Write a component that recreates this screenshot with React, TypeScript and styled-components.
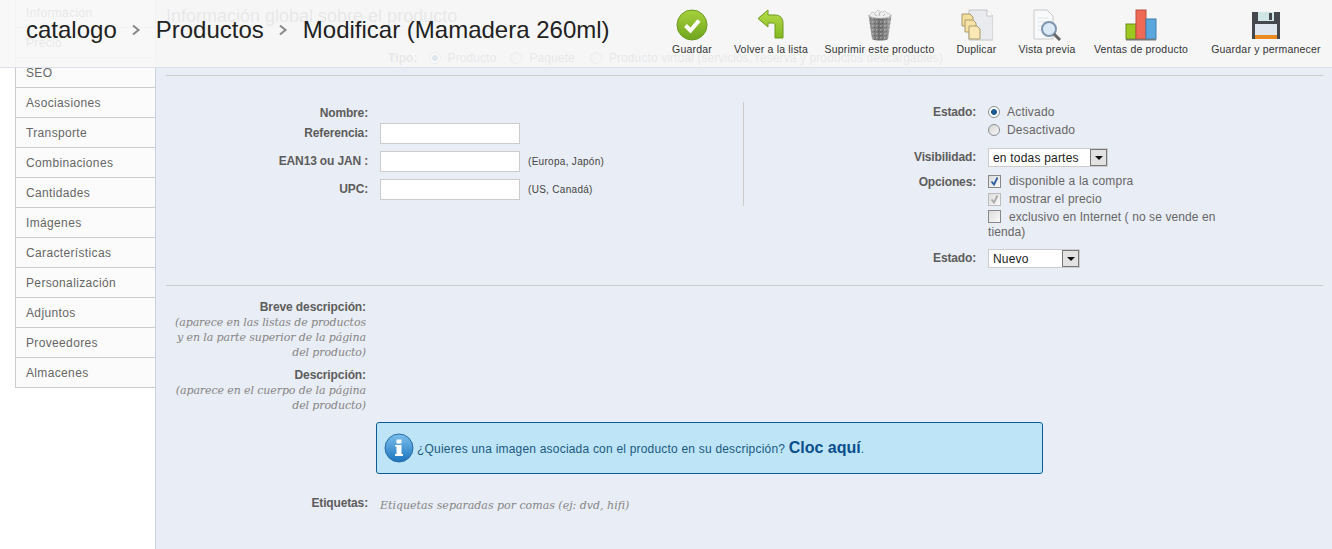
import React from 'react';
import styled, { createGlobalStyle } from 'styled-components';

const GlobalStyle = createGlobalStyle`
  html, body {
    margin: 0;
    padding: 0;
    background: #fff;
    overflow: hidden;
  }
  body {
    font-family: "Liberation Sans", Arial, sans-serif;
    font-size: 12px;
    color: #666;
  }
  * { box-sizing: border-box; }
`;

const Page = styled.div`
  position: relative;
  width: 1332px;
  height: 549px;
  overflow: hidden;
  display: flex;
  padding-left: 15px;
`;

/* translucent bar lying over the top of the page */
const Header = styled.header`
  position: absolute;
  top: 0;
  left: 0;
  right: 0;
  height: 68px;
  background: rgba(247, 247, 247, 0.89);
  border-bottom: 1px solid #dde1e8;
  display: flex;
  justify-content: space-between;
  padding-right: 1px;
`;

const Crumbs = styled.div`
  display: flex;
  align-items: center;
  height: 60px;
  padding-left: 26px;
  font-size: 24px;
  color: #222;
`;

const CrumbSep = styled.span`
  width: 39px;
  text-align: center;
  display: flex;
  justify-content: center;
`;

const Toolbar = styled.div`
  display: flex;
`;

const ToolItem = styled.div<{ $w: number }>`
  width: ${p => p.$w}px;
  display: flex;
  flex-direction: column;
  align-items: center;
  padding-top: 9px;
  font-size: 10.5px;
  letter-spacing: 0.2px;
  color: #333;
  white-space: nowrap;
`;

const ToolIcon = styled.svg`
  width: 32px;
  height: 32px;
  margin-bottom: 2px;
`;

const Sidebar = styled.ul`
  width: 140px;
  height: 390px;
  margin: -2px 0 0;
  padding: 0;
  list-style: none;
  background: #fbfbfb;
  border-left: 1px solid #ccc;
  flex-shrink: 0;
`;

const Tab = styled.li`
  height: 30px;
  line-height: 31px;
  padding-left: 10px;
  border-bottom: 1px solid #ccc;
  color: #666;
  letter-spacing: 0.35px;
`;

const Main = styled.main`
  flex: 1;
  height: 549px;
  background: #e9edf5;
  border-left: 1px solid #ccd2dc;
  padding: 0 9px 0 10px;
`;

const Title = styled.h2`
  margin: 0;
  height: 32px;
  line-height: 32px;
  font-size: 18px;
  font-weight: normal;
  color: #666;
`;

const TypeRow = styled.div`
  display: flex;
  align-items: center;
  height: 20px;
  margin-top: 16px;
  padding-left: 222px;
  color: #666;
  letter-spacing: 0.1px;
`;

const TypeLabel = styled.span`
  font-weight: bold;
  margin-right: 11px;
`;

const TypeOption = styled.span<{ $gap: number }>`
  display: flex;
  align-items: center;
  gap: 7px;
  margin-right: ${p => p.$gap}px;
`;

const Rule = styled.hr<{ $mt?: number }>`
  height: 1px;
  border: 0;
  margin: ${p => p.$mt ?? 0}px 0 0;
  background: #ccc;
`;

const TopForm = styled.div`
  display: flex;
  height: 183px;
  margin-top: 26px;
`;

const LeftColumn = styled.div`
  width: 578px;
  height: 104px;
  border-right: 1px solid #ccc;
`;

const RightColumn = styled.div`
  flex: 1;
`;

const Row = styled.div<{ $label: number; $mb?: number }>`
  display: grid;
  grid-template-columns: ${p => p.$label}px 1fr;
  column-gap: 12px;
  margin-bottom: ${p => p.$mb ?? 0}px;
`;

const Label = styled.label<{ $h?: number }>`
  display: block;
  text-align: right;
  font-weight: bold;
  letter-spacing: -0.15px;
  color: #5c5c5c;
  line-height: ${p => p.$h ?? 21}px;
`;

const FieldLine = styled.div`
  display: flex;
  align-items: center;
  min-height: 21px;
`;

const TextInput = styled.input`
  width: 140px;
  height: 21px;
  background: #fff;
  border: 1px solid #ccc;
  padding: 0 4px;
  margin: 0;
`;

const Note = styled.span`
  margin-left: 8px;
  font-size: 10px;
  color: #444;
  letter-spacing: 0.3px;
`;

const Stack = styled.div`
  width: 240px;
`;

const ChoiceLine = styled.div<{ $h: number }>`
  display: flex;
  align-items: center;
  height: ${p => p.$h}px;
  gap: 7px;
  letter-spacing: 0.2px;
`;

const Radio = styled.span<{ $on?: boolean }>`
  width: 12px;
  height: 12px;
  border-radius: 50%;
  flex-shrink: 0;
  border: 1px solid #8a8f96;
  background: ${p =>
    p.$on
      ? 'radial-gradient(circle, #1d5c90 0 2.6px, #fff 3.2px)'
      : 'linear-gradient(135deg, #d6d6d6, #f8f8f8)'};
`;

const Box = styled.span<{ $dim?: boolean }>`
  width: 13px;
  height: 13px;
  flex-shrink: 0;
  border: 1px solid ${p => (p.$dim ? '#bbb' : '#888')};
  background: linear-gradient(135deg, #dcdcdc, #fafafa);
  margin-right: 1px;
  display: flex;
  align-items: center;
  justify-content: center;
`;

const WrapText = styled.div`
  line-height: 15px;
  letter-spacing: 0.1px;
  margin-top: 2px;
`;

const InlineBox = styled(Box)`
  display: inline-flex;
  vertical-align: -2px;
  margin-right: 8px;
`;

const Select = styled.div<{ $w: number }>`
  width: ${p => p.$w}px;
  height: 19px;
  background: #fff;
  border: 1px solid #ccc;
  display: flex;
  align-items: center;
  justify-content: space-between;
  padding-left: 4px;
  color: #222;
  letter-spacing: 0.2px;
`;

const SelectArrow = styled.span`
  width: 17px;
  height: 17px;
  background: #e2e2e2;
  border: 1px solid #777;
  display: flex;
  align-items: center;
  justify-content: center;
  &::after {
    content: '';
    border-left: 4px solid transparent;
    border-right: 4px solid transparent;
    border-top: 4px solid #111;
  }
`;

const DescBlock = styled.div<{ $mt: number }>`
  width: 200px;
  margin-top: ${p => p.$mt}px;
  text-align: right;
`;

const DescLabel = styled.div`
  font-weight: bold;
  letter-spacing: -0.1px;
  color: #5c5c5c;
  line-height: 15px;
`;

const Hint = styled.div`
  font-family: "DejaVu Serif", "Liberation Serif", serif;
  font-style: italic;
  font-size: 11px;
  letter-spacing: -0.1px;
  line-height: 15px;
  color: #858585;
`;

const InfoBox = styled.div`
  width: 667px;
  height: 52px;
  margin: 9px 0 0 210px;
  background: #bde4f7;
  border: 1px solid #0f5a94;
  border-radius: 3px;
  display: flex;
  align-items: center;
  padding: 0 7px;
  gap: 3px;
  color: #1c5a80;
  letter-spacing: 0.2px;
`;

const InfoLink = styled.a`
  font-size: 16px;
  font-weight: bold;
  color: #0c4f8c;
  letter-spacing: 0;
`;

const TagRow = styled.div`
  display: grid;
  grid-template-columns: 202px 1fr;
  column-gap: 12px;
  margin-top: 19px;
  align-items: start;
`;

const TagHint = styled(Hint)`
  line-height: 21px;
  padding-top: 2px;
  letter-spacing: 0;
`;

const SaveIcon = () => (
  <ToolIcon viewBox="0 0 32 32">
    <defs>
      <linearGradient id="saveG" x1="0" y1="0" x2="0" y2="1">
        <stop offset="0" stopColor="#a6d13c" />
        <stop offset="1" stopColor="#6fa51d" />
      </linearGradient>
    </defs>
    <circle cx="16" cy="16" r="15" fill="url(#saveG)" stroke="#6b9a22" />
    <path d="M9.500 16.500l5 5 8.500-10" fill="none" stroke="#fff" strokeWidth="4" />
  </ToolIcon>
);

const BackIcon = () => (
  <ToolIcon viewBox="0 0 32 32">
    <defs>
      <linearGradient id="backG" x1="0" y1="0" x2="0" y2="1">
        <stop offset="0" stopColor="#b7dc4a" />
        <stop offset="1" stopColor="#83b81f" />
      </linearGradient>
    </defs>
    <path
      d="M3 9.500L13 1v5h7c5 0 8 3 8 8v15h-8V16c0-1-1-2-2-2h-5v4z"
      fill="url(#backG)"
      stroke="#6f9a1d"
    />
  </ToolIcon>
);

const TrashIcon = () => (
  <ToolIcon viewBox="0 0 32 32">
    <defs>
      <linearGradient id="binG" x1="0" y1="0" x2="1" y2="0">
        <stop offset="0" stopColor="#9a9a9a" />
        <stop offset="0.5" stopColor="#6e6e6e" />
        <stop offset="1" stopColor="#a5a5a5" />
      </linearGradient>
      <pattern id="binMesh" width="4" height="4" patternUnits="userSpaceOnUse">
        <rect x="0" y="0" width="1.500" height="1.500" fill="#c9c9c9" />
        <rect x="2" y="2" width="1" height="1" fill="#4f4f4f" />
      </pattern>
    </defs>
    <path d="M4.500 6l3.500 24c2 2 14 2 16 0l3.500-24z" fill="url(#binG)" />
    <path d="M4.500 6l3.500 24c2 2 14 2 16 0l3.500-24z" fill="url(#binMesh)" opacity="0.6" />
    <path d="M5 7l3-4 3 1 3-3 3 2 4-1 2 2 3 1 1 2c-4 3-18 3-22 0z" fill="#eeeeee" stroke="#a8a8a8" strokeWidth="0.500" />
    <path d="M10 5l3 2M16 3l-1 4M21 5l-2 2" stroke="#b5b5b5" />
  </ToolIcon>
);

const DuplicateIcon = () => (
  <ToolIcon viewBox="0 0 32 32">
    <path d="M8 1h18l6 6v24H8z" fill="#e9ebef" stroke="#c4c4c4" />
    <path d="M26 1v6h6" fill="#fff" stroke="#c4c4c4" />
    <path d="M1 5h8l3 3v9H1z" fill="#f5df9c" stroke="#a99a6c" />
    <path d="M4 11h8l3 3v9H4z" fill="#f7e3a6" stroke="#a99a6c" />
    <path d="M8 17h8l3 3v10H8z" fill="#fae9b5" stroke="#a99a6c" />
  </ToolIcon>
);

const PreviewIcon = () => (
  <ToolIcon viewBox="0 0 32 32">
    <path d="M3 1h13l6 6v23H3z" fill="#f8f9fb" stroke="#c9c9c9" />
    <path d="M7 9h10M7 13h10M7 17h6M7 21h6" stroke="#dfe3ea" />
    <circle cx="18" cy="20" r="7" fill="#dbe9f7" stroke="#7d95ad" strokeWidth="2" />
    <path d="M23 25l6 6" stroke="#666" strokeWidth="3" />
  </ToolIcon>
);

const ChartIcon = () => (
  <ToolIcon viewBox="0 0 32 32">
    <rect x="1" y="15" width="10" height="15" fill="#9cc81f" stroke="#6e8e1c" />
    <rect x="11" y="1" width="10" height="29" fill="#ef6a55" stroke="#b9503f" />
    <rect x="21" y="10" width="10" height="20" fill="#5aa7de" stroke="#3f7fae" />
    <rect x="1" y="30" width="30" height="1.500" fill="#777" />
  </ToolIcon>
);

const DiskIcon = () => (
  <ToolIcon viewBox="0 0 32 32">
    <path d="M2 3h28v27H2z" fill="#45494f" />
    <rect x="8" y="3" width="16" height="9" fill="#cfe6e4" />
    <rect x="19" y="4" width="3" height="7" fill="#45494f" />
    <rect x="5" y="15" width="22" height="11" fill="#dfe6ef" />
    <rect x="5" y="26" width="22" height="4" fill="#ec8a22" />
  </ToolIcon>
);

const InfoIcon = () => (
  <svg width="30" height="30" viewBox="0 0 30 30">
    <defs>
      <linearGradient id="infoG" x1="0" y1="0" x2="0" y2="1">
        <stop offset="0" stopColor="#7cc0ee" />
        <stop offset="1" stopColor="#1c74bd" />
      </linearGradient>
    </defs>
    <circle cx="15" cy="15" r="14" fill="url(#infoG)" stroke="#2a6ea6" />
    <rect x="12.500" y="12" width="5" height="10" fill="#fff" />
    <rect x="12.500" y="6.500" width="5" height="4" fill="#fff" />
    <rect x="11" y="21" width="8" height="2" fill="#fff" />
    <rect x="11" y="12" width="3" height="1.500" fill="#fff" />
  </svg>
);

const Tick = ({ color }: { color: string }) => (
  <svg width="11" height="11" viewBox="0 0 11 11">
    <path d="M2.500 5.500l2.500 3 3.500-7" fill="none" stroke={color} strokeWidth="1.800" />
  </svg>
);

const Chevron = () => (
  <svg width="10" height="12" viewBox="0 0 10 12">
    <path d="M2 1.500L7.500 6 2 10.500" fill="none" stroke="#888" strokeWidth="2" />
  </svg>
);

const tabs = [
  'Información',
  'Precio',
  'SEO',
  'Asociasiones',
  'Transporte',
  'Combinaciones',
  'Cantidades',
  'Imágenes',
  'Características',
  'Personalización',
  'Adjuntos',
  'Proveedores',
  'Almacenes',
];

const tools = [
  { label: 'Guardar', w: 62, icon: <SaveIcon /> },
  { label: 'Volver a la lista', w: 96, icon: <BackIcon /> },
  { label: 'Suprimir este producto', w: 121, icon: <TrashIcon /> },
  { label: 'Duplicar', w: 73, icon: <DuplicateIcon /> },
  { label: 'Vista previa', w: 68, icon: <PreviewIcon /> },
  { label: 'Ventas de producto', w: 120, icon: <ChartIcon /> },
  { label: 'Guardar y permanecer', w: 130, icon: <DiskIcon /> },
];

const App: React.FC = () => (
  <Page>
    <GlobalStyle />
    <Sidebar>
      {tabs.map(t => (
        <Tab key={t}>{t}</Tab>
      ))}
    </Sidebar>
    <Main>
      <Title>Información global sobre el producto</Title>
      <TypeRow>
        <TypeLabel>Tipo:</TypeLabel>
        <TypeOption $gap={14}>
          <Radio $on />
          Producto
        </TypeOption>
        <TypeOption $gap={15}>
          <Radio />
          Paquete
        </TypeOption>
        <TypeOption $gap={0}>
          <Radio />
          Producto virtual (servicios, reserva y productos descargables)
        </TypeOption>
      </TypeRow>
      <Rule $mt={7} />
      <TopForm>
        <LeftColumn>
          <Row $label={202} $mb={-1}>
            <Label $h={22}>Nombre:</Label>
            <div />
          </Row>
          <Row $label={202} $mb={7}>
            <Label>Referencia:</Label>
            <FieldLine>
              <TextInput />
            </FieldLine>
          </Row>
          <Row $label={202} $mb={7}>
            <Label>EAN13 ou JAN :</Label>
            <FieldLine>
              <TextInput />
              <Note>(Europa, Japón)</Note>
            </FieldLine>
          </Row>
          <Row $label={202}>
            <Label>UPC:</Label>
            <FieldLine>
              <TextInput />
              <Note>(US, Canadá)</Note>
            </FieldLine>
          </Row>
        </LeftColumn>
        <RightColumn>
          <Row $label={232} $mb={10}>
            <Label $h={20}>Estado:</Label>
            <Stack>
              <ChoiceLine $h={20}>
                <Radio $on />
                Activado
              </ChoiceLine>
              <ChoiceLine $h={16}>
                <Radio />
                Desactivado
              </ChoiceLine>
            </Stack>
          </Row>
          <Row $label={232} $mb={5}>
            <Label $h={19}>Visibilidad:</Label>
            <Select $w={120}>
              en todas partes
              <SelectArrow />
            </Select>
          </Row>
          <Row $label={232} $mb={9}>
            <Label $h={20}>Opciones:</Label>
            <Stack>
              <ChoiceLine $h={18}>
                <Box>
                  <Tick color="#2d5f9e" />
                </Box>
                disponible a la compra
              </ChoiceLine>
              <ChoiceLine $h={18}>
                <Box $dim>
                  <Tick color="#aaa" />
                </Box>
                mostrar el precio
              </ChoiceLine>
              <WrapText>
                <InlineBox />
                exclusivo en Internet ( no se vende en tienda)
              </WrapText>
            </Stack>
          </Row>
          <Row $label={232}>
            <Label $h={19}>Estado:</Label>
            <Select $w={92}>
              Nuevo
              <SelectArrow />
            </Select>
          </Row>
        </RightColumn>
      </TopForm>
      <Rule />
      <DescBlock $mt={14}>
        <DescLabel>Breve descripción:</DescLabel>
        <Hint>(aparece en las listas de productos y en la parte superior de la página del producto)</Hint>
      </DescBlock>
      <DescBlock $mt={8}>
        <DescLabel>Descripción:</DescLabel>
        <Hint>(aparece en el cuerpo de la página del producto)</Hint>
      </DescBlock>
      <InfoBox>
        <InfoIcon />
        <span>
          ¿Quieres una imagen asociada con el producto en su descripción? <InfoLink>Cloc aquí</InfoLink>.
        </span>
      </InfoBox>
      <TagRow>
        <Label>Etiquetas:</Label>
        <TagHint>Etiquetas separadas por comas (ej: dvd, hifi)</TagHint>
      </TagRow>
    </Main>
    <Header>
      <Crumbs>
        catalogo
        <CrumbSep>
          <Chevron />
        </CrumbSep>
        Productos
        <CrumbSep>
          <Chevron />
        </CrumbSep>
        Modificar (Mamadera 260ml)
      </Crumbs>
      <Toolbar>
        {tools.map(t => (
          <ToolItem key={t.label} $w={t.w}>
            {t.icon}
            {t.label}
          </ToolItem>
        ))}
      </Toolbar>
    </Header>
  </Page>
);

export default App;
